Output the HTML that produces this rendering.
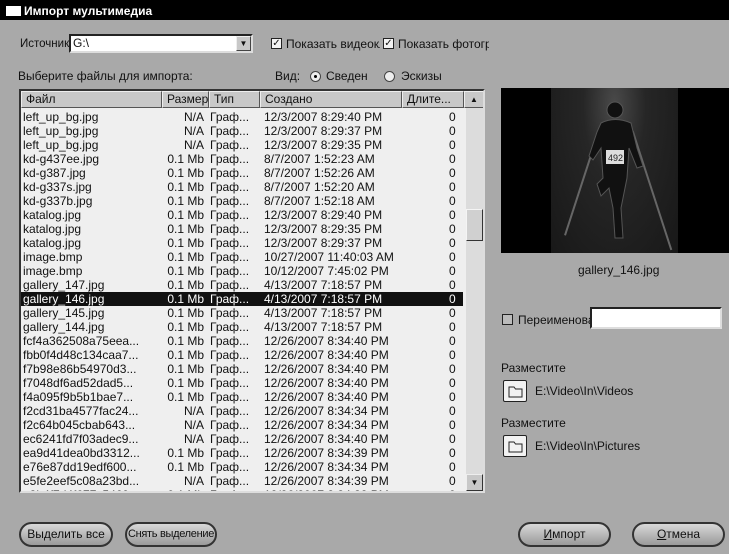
<!DOCTYPE html>
<html><head><meta charset="utf-8"><style>
*{margin:0;padding:0;box-sizing:border-box}
body{width:729px;height:554px;overflow:hidden;background:#a9a9a9;font-family:"Liberation Sans","DejaVu Sans",sans-serif;font-size:12px;color:#111;position:relative}
.a{position:absolute;white-space:nowrap}
.title{left:0;top:0;width:729px;height:20px;background:#000;color:#fff;font-weight:bold;font-size:12px;line-height:22px;padding-left:24px}
.title i{position:absolute;left:6px;top:6px;width:15px;height:10px;background:#fff}
.cb{width:11px;height:11px;background:#f2f2f2;border:1px solid #222;font-size:10px;line-height:9px;text-align:center;font-weight:bold}
.list{left:19px;top:89px;width:466px;height:404px;background:#efefef;border:2px solid #333;border-right-color:#ddd;border-bottom-color:#ddd;overflow:hidden}
.hdr{position:absolute;top:0;height:17px;background:#c8c8c8;border:1px solid #555;border-top-color:#eee;border-left-color:#eee;line-height:15px;padding:0 4px;font-size:12px}
.row{position:absolute;left:0;width:442px;height:14px;line-height:14px;font-size:12px}
.row span{position:absolute}
.sel{background:#111;color:#fff}
.btn{height:25px;border:2px solid #333;border-radius:13px;background:linear-gradient(#d8d8d8,#9a9a9a);text-align:center;line-height:21px;font-size:12px}
.fold{width:24px;height:22px;border:1px solid #222;background:#f2f2f2;border-radius:2px}
</style></head><body>
<div class="a title"><i></i>Импорт мультимедиа</div>
<div class="a" style="left:20px;top:38px;font-size:11.5px">Источник:</div>
<div class="a" style="left:69px;top:34px;width:184px;height:19px;background:#fff;border:2px solid #222;border-right-color:#ddd;border-bottom-color:#ddd;padding-left:2px;line-height:15px">G:\</div>
<div class="a" style="left:236px;top:36px;width:15px;height:15px;background:#c8c8c8;border:1px solid #444;border-top-color:#eee;border-left-color:#eee;font-size:8px;text-align:center;line-height:13px">▼</div>
<div class="a cb" style="left:271px;top:38px">✓</div>
<div class="a" style="left:286px;top:37px;width:94px;overflow:hidden">Показать видеоклипы</div>
<div class="a cb" style="left:383px;top:38px">✓</div>
<div class="a" style="left:398px;top:37px;width:91px;overflow:hidden">Показать фотографии</div>
<div class="a" style="left:18px;top:69px">Выберите файлы для импорта:</div>
<div class="a" style="left:275px;top:69px">Вид:</div>
<div class="a" style="left:310px;top:71px;width:11px;height:11px;border-radius:50%;background:#eee;border:1px solid #444"><div style="position:absolute;left:3px;top:3px;width:3px;height:3px;background:#000;border-radius:50%"></div></div>
<div class="a" style="left:326px;top:69px">Сведен</div>
<div class="a" style="left:384px;top:71px;width:11px;height:11px;border-radius:50%;background:#eee;border:1px solid #444"></div>
<div class="a" style="left:401px;top:69px">Эскизы</div>
<div class="a list">
<div class="hdr" style="left:0;width:141px">Файл</div>
<div class="hdr" style="left:141px;width:47px;text-align:right">Размер</div>
<div class="hdr" style="left:188px;width:51px">Тип</div>
<div class="hdr" style="left:239px;width:142px">Создано</div>
<div class="hdr" style="left:381px;width:62px">Длите...</div>
<div class="hdr" style="left:443px;width:20px;font-size:8px;text-align:center">▲</div>
<div style="position:absolute;left:445px;top:17px;width:19px;height:384px;background:#dcdcdc"></div>
<div style="position:absolute;left:445px;top:118px;width:17px;height:32px;background:#d0d0d0;border:1px solid #333;border-top-color:#f4f4f4;border-left-color:#f4f4f4"></div>
<div style="position:absolute;left:445px;top:383px;width:17px;height:17px;background:#c8c8c8;border:1px solid #333;border-top-color:#eee;border-left-color:#eee;font-size:8px;text-align:center;line-height:15px">▼</div>
<div id="rows"></div>
</div>
<div class="a" style="left:501px;top:88px;width:228px;height:165px;background:#000;overflow:hidden">
<div style="position:absolute;left:50px;top:0;width:127px;height:165px;background:radial-gradient(ellipse at 50% 10%,#4a4a4a 0,#262626 35%,#181818 100%)"></div>
<div style="position:absolute;left:80px;top:40px;width:2px;height:110px;background:#666;transform:rotate(18deg)"></div>
<div style="position:absolute;left:150px;top:40px;width:2px;height:125px;background:#666;transform:rotate(-18deg)"></div>
<svg style="position:absolute;left:50px;top:0" width="127" height="165"><g fill="#111" stroke="#555" stroke-width="1"><circle cx="64" cy="22" r="8"/><path d="M50 35 Q64 28 80 35 L86 60 L92 78 L86 80 L78 60 L76 90 L70 120 L72 150 L64 150 L62 120 L58 100 L50 108 L46 96 L52 90 L50 60 L42 72 L38 68 L46 44Z"/></g><rect x="55" y="62" width="18" height="14" fill="#ddd"/><text x="57" y="73" font-size="9" font-family="Liberation Sans" fill="#222">492</text></svg>
</div>
<div class="a" style="left:578px;top:263px">gallery_146.jpg</div>
<div class="a cb" style="left:502px;top:314px;background:#bbb"></div>
<div class="a" style="left:518px;top:313px;width:72px;overflow:hidden">Переименовать</div>
<div class="a" style="left:590px;top:307px;width:132px;height:22px;background:#fff;border:2px solid #222;border-right-color:#ddd;border-bottom-color:#ddd"></div>
<div class="a" style="left:501px;top:361px">Разместите</div>
<div class="a fold" style="left:503px;top:380px"><svg width="22" height="20"><path d="M5 6h5l1.5 2H18v8H5z" fill="none" stroke="#222"/></svg></div>
<div class="a" style="left:535px;top:384px">E:\Video\In\Videos</div>
<div class="a" style="left:501px;top:416px">Разместите</div>
<div class="a fold" style="left:503px;top:435px"><svg width="22" height="20"><path d="M5 6h5l1.5 2H18v8H5z" fill="none" stroke="#222"/></svg></div>
<div class="a" style="left:535px;top:439px">E:\Video\In\Pictures</div>
<div class="a btn" style="left:19px;top:522px;width:94px">Выделить все</div>
<div class="a btn" style="left:125px;top:522px;width:92px;font-size:11px;letter-spacing:-0.3px">Снять выделение</div>
<div class="a btn" style="left:518px;top:522px;width:93px"><u>И</u>мпорт</div>
<div class="a btn" style="left:632px;top:522px;width:93px"><u>О</u>тмена</div>
<script>
var d=[["left_up_bg.jpg","N/A","12/3/2007 8:29:40 PM"],["left_up_bg.jpg","N/A","12/3/2007 8:29:37 PM"],["left_up_bg.jpg","N/A","12/3/2007 8:29:35 PM"],["kd-g437ee.jpg","0.1 Mb","8/7/2007 1:52:23 AM"],["kd-g387.jpg","0.1 Mb","8/7/2007 1:52:26 AM"],["kd-g337s.jpg","0.1 Mb","8/7/2007 1:52:20 AM"],["kd-g337b.jpg","0.1 Mb","8/7/2007 1:52:18 AM"],["katalog.jpg","0.1 Mb","12/3/2007 8:29:40 PM"],["katalog.jpg","0.1 Mb","12/3/2007 8:29:35 PM"],["katalog.jpg","0.1 Mb","12/3/2007 8:29:37 PM"],["image.bmp","0.1 Mb","10/27/2007 11:40:03 AM"],["image.bmp","0.1 Mb","10/12/2007 7:45:02 PM"],["gallery_147.jpg","0.1 Mb","4/13/2007 7:18:57 PM"],["gallery_146.jpg","0.1 Mb","4/13/2007 7:18:57 PM"],["gallery_145.jpg","0.1 Mb","4/13/2007 7:18:57 PM"],["gallery_144.jpg","0.1 Mb","4/13/2007 7:18:57 PM"],["fcf4a362508a75eea...","0.1 Mb","12/26/2007 8:34:40 PM"],["fbb0f4d48c134caa7...","0.1 Mb","12/26/2007 8:34:40 PM"],["f7b98e86b54970d3...","0.1 Mb","12/26/2007 8:34:40 PM"],["f7048df6ad52dad5...","0.1 Mb","12/26/2007 8:34:40 PM"],["f4a095f9b5b1bae7...","0.1 Mb","12/26/2007 8:34:40 PM"],["f2cd31ba4577fac24...","N/A","12/26/2007 8:34:34 PM"],["f2c64b045cbab643...","N/A","12/26/2007 8:34:34 PM"],["ec6241fd7f03adec9...","N/A","12/26/2007 8:34:40 PM"],["ea9d41dea0bd3312...","0.1 Mb","12/26/2007 8:34:39 PM"],["e76e87dd19edf600...","0.1 Mb","12/26/2007 8:34:34 PM"],["e5fe2eef5c08a23bd...","N/A","12/26/2007 8:34:39 PM"],["e3b4f7d4f677c5469...","0.1 Mb","12/26/2007 8:34:38 PM"]];
var h="";d.forEach(function(r,i){h+='<div class="row'+(i==13?' sel':'')+'" style="top:'+(19+i*14)+'px"><span style="left:2px">'+r[0]+'</span><span style="right:259px">'+r[1]+'</span><span style="left:189px">Граф...</span><span style="left:243px">'+r[2]+'</span><span style="left:428px">0</span></div>';});
document.getElementById("rows").innerHTML=h;
</script>
</body></html>
